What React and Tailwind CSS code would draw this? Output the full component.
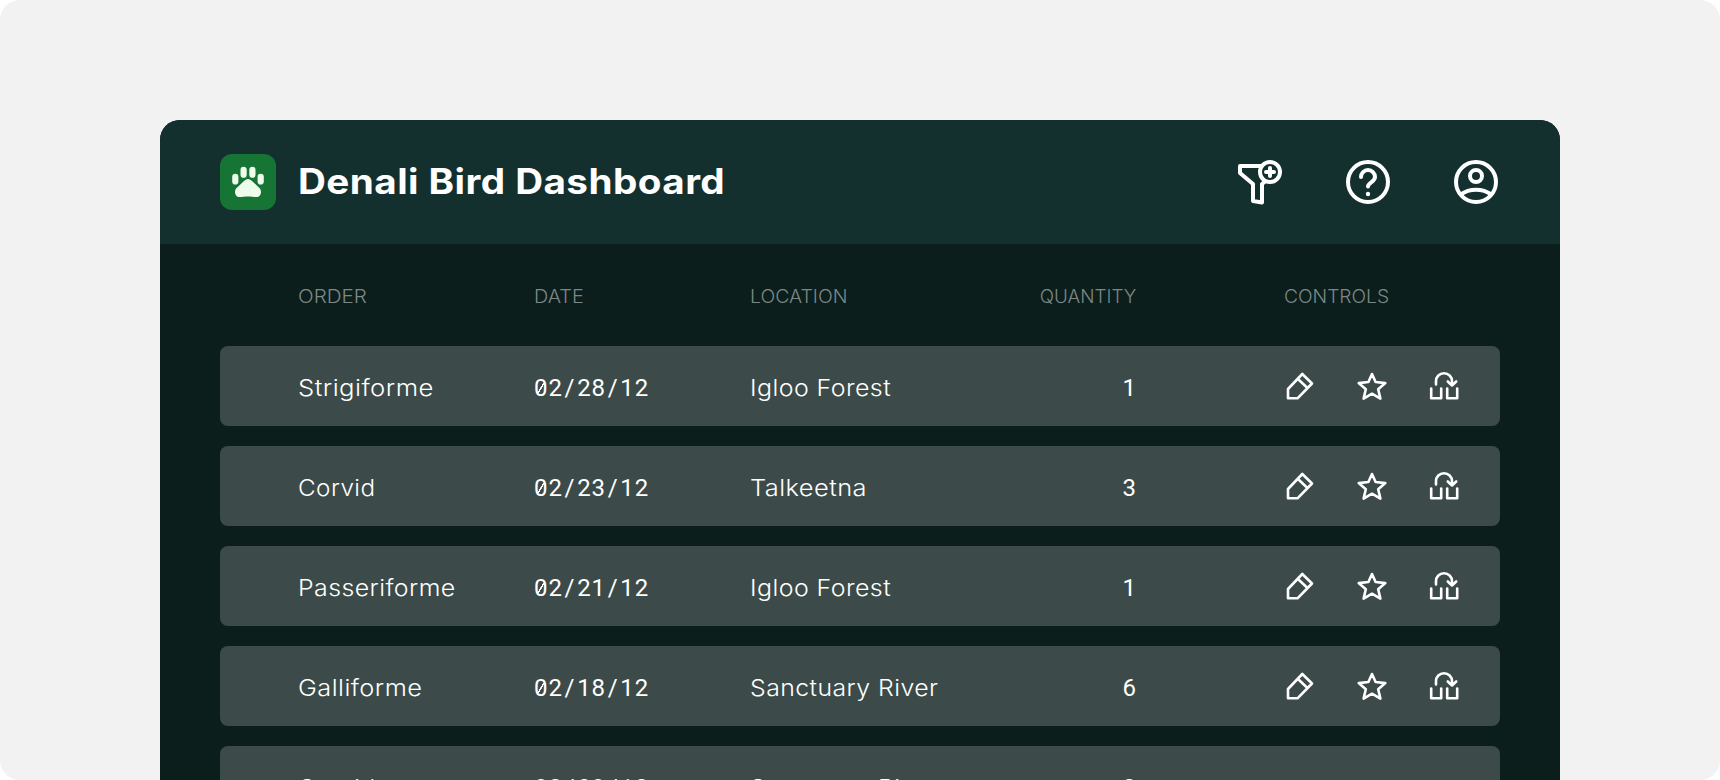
const rows = [
  { order: 'Strigiforme', orderFit: 'scale-x-[1.115]', date: '02/28/12', location: 'Igloo Forest', locationFit: 'scale-x-[1.085]', quantity: '1' },
  { order: 'Corvid', orderFit: 'scale-x-[1.055]', date: '02/23/12', location: 'Talkeetna', locationFit: 'scale-x-[1.105]', quantity: '3' },
  { order: 'Passeriforme', orderFit: 'scale-x-[1.082]', date: '02/21/12', location: 'Igloo Forest', locationFit: 'scale-x-[1.085]', quantity: '1' },
  { order: 'Galliforme', orderFit: 'scale-x-[1.103]', date: '02/18/12', location: 'Sanctuary River', locationFit: 'scale-x-[1.08]', quantity: '6' },
  { order: 'Corvid', orderFit: 'scale-x-[1.055]', date: '02/09/12', location: 'Sanctuary River', locationFit: 'scale-x-[1.08]', quantity: '2', hideControls: true },
];

function Icon({ size, children, width }) {
  return (
    <svg width={size} height={size} viewBox={`0 0 ${size} ${size}`} fill="none" stroke="white" strokeWidth={width}>
      {children}
    </svg>
  );
}

function Paw() {
  return (
    <svg width="56" height="56" viewBox="0 0 56 56" fill="#effcec">
      <rect x="12.2" y="19.7" width="6.2" height="10.8" rx="3.1" />
      <rect x="20.5" y="12.8" width="6.2" height="11" rx="3.1" />
      <rect x="29.3" y="12.8" width="6.2" height="11" rx="3.1" />
      <rect x="37.6" y="19.7" width="6.2" height="10.8" rx="3.1" />
      <path d="M28 24.9c1.2 0 2.3.5 3.4 1.500l8 7.600c3 2.900 1.600 9.100-3 9.100-2.700 0-5-.6-8.400-.6s-5.700.6-8.400.6c-4.600 0-6-6.200-3-9.100l8-7.600c1.100-1 2.200-1.500 3.400-1.500z" />
    </svg>
  );
}

function Fit({ className, children }) {
  return <span className={`inline-block whitespace-nowrap ${className}`}>{children}</span>;
}

function DateText({ value }) {
  return (
    <span className="font-[Roboto] text-[24px] font-normal tracking-[0.92px]">
      {value.split('').map((c, i) =>
        c === '/' ? (
          <span key={i} className="px-[1.75px]">/</span>
        ) : c === '0' ? (
          <span key={i} className="bg-[linear-gradient(122deg,transparent_44%,white_45%,white_55%,transparent_56%)] bg-[length:8px_12px] bg-[position:3px_8px] bg-no-repeat">0</span>
        ) : (
          c
        ),
      )}
    </span>
  );
}

export default function App() {
  return (
    <div className="h-[780px] w-[1720px] overflow-hidden rounded-[20px] bg-[#f2f2f2] px-40 pt-[120px] font-[Inter,sans-serif] text-white">
      <div className="h-[660px] overflow-hidden rounded-t-[20px] bg-[#0b1e1c]">
        <header className="flex h-[124px] items-center bg-[#14302e] px-[60px]">
          <div className="size-14 rounded-xl bg-[#167434]">
            <Paw />
          </div>
          <h1 className="mb-0.5 ml-[22px] origin-left scale-x-[1.104] whitespace-nowrap text-[35px] font-bold leading-[44px] tracking-[0.4px]">Denali Bird Dashboard</h1>
          <div className="ml-auto flex gap-[60px]">
            <Icon size={48} width={4}>
              <g strokeLinejoin="round" strokeLinecap="round">
                <path d="M25 8H4v7l13 11v17l9 1.500V26l3-2.500" />
                <circle cx="34" cy="14" r="10" />
                <path d="M30 14h8M34 10v8" />
              </g>
            </Icon>
            <Icon size={48} width={4}>
              <circle cx="24" cy="24" r="20" />
              <path strokeLinecap="round" d="M17 19a7 7 0 0 1 14 0c0 5-7 5.500-7 9.500" />
              <circle cx="24" cy="36" r="2.2" fill="white" stroke="none" />
            </Icon>
            <Icon size={48} width={4}>
              <circle cx="24" cy="24" r="20" />
              <circle cx="24" cy="18" r="6" />
              <path d="M8.700 36.500c9-6.400 21.600-6.400 30.600 0" />
            </Icon>
          </div>
        </header>
        <div className="flex h-[102px] items-center pl-[138px] pt-[3px] text-[18px] font-light text-[#7c8886]">
          <span className="w-[236px]"><Fit className="origin-left scale-x-[1.145]">ORDER</Fit></span>
          <span className="w-[216px]"><Fit className="origin-left scale-x-[1.1]">DATE</Fit></span>
          <span className="w-[286px]"><Fit className="origin-left scale-x-[1.08]">LOCATION</Fit></span>
          <span className="w-[100px] text-right"><Fit className="origin-right scale-x-[1.045]">QUANTITY</Fit></span>
          <span className="ml-[148px]"><Fit className="origin-left scale-x-[1.067]">CONTROLS</Fit></span>
        </div>
        <div className="flex flex-col gap-5 px-[60px]">
          {rows.map((row, i) => (
            <div key={i} className="flex h-20 shrink-0 items-center rounded-lg bg-[#3c4b49] pl-[78px] text-[23px] font-light">
              <span className="w-[236px] pt-[5px] tracking-[0.4px]"><Fit className={`origin-left ${row.orderFit}`}>{row.order}</Fit></span>
              <span className="w-[216px] pt-[3px]"><DateText value={row.date} /></span>
              <span className="w-[286px] pt-[5px] tracking-[0.4px]"><Fit className={`origin-left ${row.locationFit}`}>{row.location}</Fit></span>
              <span className="w-[100px] pt-[3px] text-right font-[Roboto] text-[24px] font-normal">{row.quantity}</span>
              {!row.hideControls && (
                <div className="ml-[148px] flex gap-10">
                  <Icon size={32} width={2.6}>
                    <path strokeLinejoin="round" d="M4 28.300V19L18.300 4 28 13.500 13.500 28.300zM13.700 8.700l9.800 9.300" />
                  </Icon>
                  <Icon size={32} width={2.6}>
                    <path strokeLinejoin="round" d="M16 4 19.600 12 29.300 13.100 22.200 19.300 24.400 28.600 16 23.700 7.600 28.600 9.800 19.300 2.700 13.100 12.400 12z" />
                  </Icon>
                  <Icon size={32} width={2.6}>
                    <path strokeLinejoin="round" strokeLinecap="round" d="M3.200 18.500v9.800h10V18.500M19.200 18.500v9.800h10V18.500M8 14.500v-3.300a8 8 0 0 1 16 0v4.300M19.800 11.500l4.200 4 4.200-4" />
                  </Icon>
                </div>
              )}
            </div>
          ))}
        </div>
      </div>
    </div>
  );
}
